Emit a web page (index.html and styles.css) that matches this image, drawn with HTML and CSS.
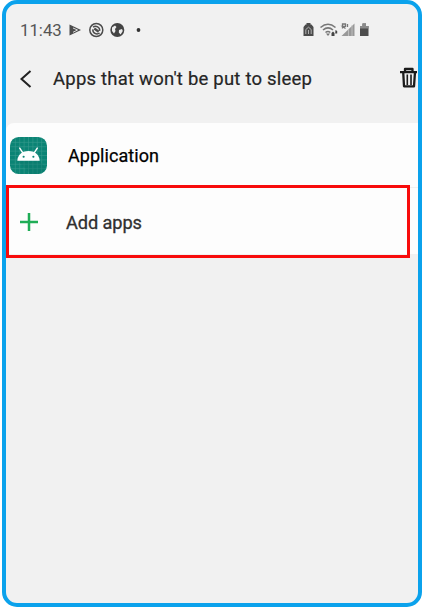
FILE: index.html
```html
<!DOCTYPE html>
<html lang="en">
<head>
<meta charset="utf-8">
<title>Apps that won't be put to sleep</title>
<link rel="stylesheet" href="styles.css">
</head>
<body>
<div class="phone">
  <div class="status">
    <span class="clock">11:43</span>
    <svg class="notices" width="75" height="18" viewBox="0 0 75 18">
      <path d="M1.500 3.500v11L13 9z" fill="#4c4c4c"/><path d="M5 7l4.500 2L5 11.300" fill="none" stroke="#ddd" stroke-width="1"/>
      <g fill="none" stroke="#4c4c4c" stroke-width="1.500"><circle cx="28.300" cy="9" r="6.500"/><path d="M25 6.200c3-2.200 7.200.1 6.600 3.700M31.600 12c-3 2.200-7.200 0-6.700-3.700"/><path d="M26.300 7.500l4.400 3.200" stroke-width="2.300"/></g>
      <circle cx="49.300" cy="9" r="7" fill="#444"/><path d="M44 6.500l3-2 1.500 1.500-1.500 2 .5 2-1.500 2.500-2-2.500zM51 9l3-1 .8 2-2.200 3.500-1.800-2z" fill="#ededed"/>
      <circle cx="70.500" cy="9" r="1.900" fill="#333"/>
    </svg>
    <svg class="signals" width="70" height="18" viewBox="0 0 70 18">
      <path d="M2.500 3.500h1V2h4v1.500h1L10.500 6v9h-10V6z" fill="#4b4b4b"/><path d="M2.800 13V8.500L5.500 6.200l2.700 2.300V13M5.500 9v4" fill="none" stroke="#bbb" stroke-width=".9"/>
      <g fill="none" stroke="#777" stroke-width="1.600"><path d="M17.500 6.500q7.500-6.500 15 0M20 9q5-4.200 10 0M22.500 11.500q2.500-2 4.800 0"/></g><path d="M23 12.500h4L25 15z" fill="#777"/><path d="M28.500 12l1.500-1.500 1.500 1.500v3h-3zM32.500 9l1.700 1v2.500h-2z" fill="#444"/>
      <path d="M51.500 2.500V15H38.500z" fill="#999"/><path d="M45.500 8v7M49 4v11" stroke="#c8c8c8" stroke-width=".8"/><path d="M39.500 7.500V3h3v2.300h-3l3 2.200M44.500 3v3" fill="none" stroke="#777" stroke-width="1.300"/>
      <path d="M57 5h2.500V2.500h3.500V5h2.500v10H57z" fill="#4d4d4d"/><path d="M57 5h2.500V2.500h3.500V5h2.500v2.500H57z" fill="#8a8a8a"/>
    </svg>
  </div>
  <header class="header">
    <svg class="back" width="14" height="20" viewBox="0 0 14 20"><path d="M11.500 2L2.500 10l9 8" fill="none" stroke="#222" stroke-width="2"/></svg>
    <h1 class="title">Apps that won't be put to sleep</h1>
    <svg class="trash" width="17" height="22" viewBox="0 0 17 22"><path d="M0 5.200h17M5 5V2h7.500v3M3.200 5l.8 14.300h10L15 5" fill="none" stroke="#1b1b1b" stroke-width="2.300" stroke-linejoin="round"/><path d="M7.300 7.500v10.500M11 7.500v10.500" stroke="#1b1b1b" stroke-width="1.600"/></svg>
  </header>
  <main class="list">
    <div class="row">
      <svg class="app-icon" width="37" height="37" viewBox="0 0 38 38">
        <rect width="38" height="38" rx="9" fill="#0b8475"/>
        <path d="M5.500 1v36M10 0v38M14.500 0v38M19 0v38M23.500 0v38M28 0v38M32.500 1v36M1 5.500h36M0 10h38M0 14.500h38M0 19h38M0 23.500h38M0 28h38M1 32.500h36" stroke="#399b8f" stroke-width=".6"/>
        <path d="M8 24.500h22L36 31q-1 6-7 7h-8z" fill="#087366" opacity=".35"/>
        <path d="M7.500 24.500q.5-7 6.500-9.300 5-1.700 10 0 6 2.300 6.500 9.300z" fill="#fff"/>
        <path d="M13 16l-3-4.500M25 16l3-4.500" stroke="#fff" stroke-width="1.500" stroke-linecap="round"/>
        <circle cx="14" cy="20.300" r="1.100" fill="#0b8475"/><circle cx="24" cy="20.300" r="1.100" fill="#0b8475"/>
      </svg>
      <span class="app-name">Application</span>
    </div>
    <div class="row add">
      <svg class="plus" width="20" height="20" viewBox="0 0 20 20"><path d="M10 1v18M1 10h18" stroke="#1fad56" stroke-width="2.500"/></svg>
      <span class="add-label">Add apps</span>
      <div class="highlight"></div>
    </div>
  </main>
</div>
</body>
</html>
```
FILE: styles.css
```css
* { box-sizing: border-box; }
body {
  margin: 0;
  background: #fff;
  font-family: Roboto, sans-serif;
}
.phone {
  width: 420px;
  height: 607px;
  margin-left: 2px;
  border: 4px solid #0ba2ec;
  border-radius: 15px;
  background: #f1f1f1;
}
.status {
  display: flex;
  align-items: center;
  height: 52px;
  padding-left: 14px;
  color: #555;
}
.clock { width: 48px; font-size: 16.8px; white-space: nowrap; }
.signals { margin-left: 160px; }
.header {
  display: flex;
  align-items: center;
  height: 46px;
  padding-left: 13px;
}
.title {
  width: 347px;
  margin: 0 0 0 20px;
  font-size: 18.5px;
  font-weight: 400;
  letter-spacing: .21px;
  color: #252525;
  -webkit-text-stroke: .2px #252525;
  white-space: nowrap;
}
.trash { flex: none; margin-top: -2px; }
.list {
  margin-top: 21px;
  background: #fdfdfd;
  border-top-left-radius: 8px;
}
.row {
  position: relative;
  display: flex;
  align-items: center;
  height: 64px;
  padding-left: 3.500px;
}
.app-name {
  margin-left: 21.500px;
  font-size: 18px;
  letter-spacing: .05px;
  color: #000;
  -webkit-text-stroke: .25px #000;
}
.add {
  height: 67px;
  border-top: 1px solid #f1f1f1;
  padding: 2px 0 0 13px;
}
.add-label {
  margin-left: 27px;
  font-size: 18.200px;
  letter-spacing: -.1px;
  color: #303030;
  -webkit-text-stroke: .3px #303030;
}
.highlight {
  position: absolute;
  left: 0;
  top: -3px;
  width: 404px;
  height: 73px;
  border: 3px solid #f80b0b;
}
```
